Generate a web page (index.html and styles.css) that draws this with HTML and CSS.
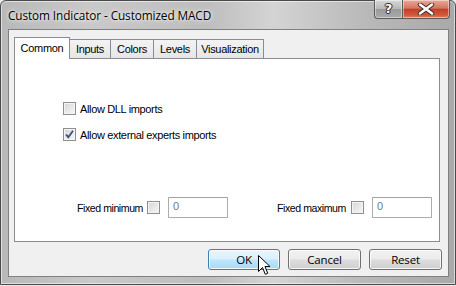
FILE: index.html
```html
<!DOCTYPE html>
<html>
<head>
<meta charset="utf-8">
<link rel="stylesheet" href="styles.css">
</head>
<body>
<div class="window">
  <div class="titlebar">
    <span class="title">Custom Indicator - Customized MACD</span>
    <div class="caption-btns">
      <div class="cbtn help"><span>?</span></div>
      <div class="cbtn close">
        <svg width="18" height="12" viewBox="0 0 18 12"><path d="M3 1.5 L15 10.5 M15 1.5 L3 10.5" stroke="#3a2a2a" stroke-width="4.4" stroke-linecap="round"/><path d="M3 1.5 L15 10.5 M15 1.5 L3 10.5" stroke="#ffffff" stroke-width="2.6" stroke-linecap="round"/></svg>
      </div>
    </div>
  </div>
  <div class="client">
    <div class="tabs">
      <div class="tab active">Common</div>
      <div class="tab">Inputs</div>
      <div class="tab">Colors</div>
      <div class="tab">Levels</div>
      <div class="tab">Visualization</div>
    </div>
    <div class="panel">
      <div class="checks">
        <label class="chk"><span class="box"></span><span>Allow DLL imports</span></label>
        <label class="chk"><span class="box checked"><svg width="11" height="11" viewBox="0 0 11 11"><path d="M2 5.5 L4.3 8.2 L9 1.8" fill="none" stroke="#3d4f87" stroke-width="1.8"/></svg></span><span>Allow external experts imports</span></label>
      </div>
      <div class="fixed">
        <div class="fgroup fmin">
          <span class="flabel">Fixed minimum</span>
          <span class="box"></span>
          <span class="field">0</span>
        </div>
        <div class="fgroup fmax">
          <span class="flabel">Fixed maximum</span>
          <span class="box"></span>
          <span class="field">0</span>
        </div>
      </div>
    </div>
    <div class="buttons">
      <div class="btn hot">OK</div>
      <div class="btn">Cancel</div>
      <div class="btn">Reset</div>
    </div>
  </div>
  <svg class="cursor" width="13" height="21" viewBox="0 0 13 21"><path d="M0.5 0.5 L0.5 16.5 L4.5 12.5 L7.3 19.3 L9.7 18.3 L7 11.5 L12 11.5 Z" fill="#fff" stroke="#000" stroke-width="1" stroke-linejoin="miter"/></svg>
</div>
</body>
</html>
```
FILE: styles.css
```css
* { box-sizing: border-box; }
html, body { margin: 0; padding: 0; }
body {
  width: 456px;
  height: 286px;
  background: #e8e8e8;
  overflow: hidden;
  font-family: "Liberation Sans", Arial, sans-serif;
  font-size: 11px;
  color: #000;
}
.window {
  position: relative;
  width: 456px;
  height: 285px;
  border: 1px solid #4a4a4a;
  border-radius: 6px 6px 0 0;
  background: linear-gradient(90deg, #b8b8b8 0%, #c9c9c9 20%, #bdbdbd 45%, #d4d4d4 60%, #b9b9b9 80%, #a9a9a9 100%);
  padding: 0 6px 7px 7px;
  display: flex;
  flex-direction: column;
  box-shadow: inset 0 0 0 1px rgba(255,255,255,0.55);
}
.titlebar {
  height: 28px;
  display: flex;
  align-items: flex-start;
  justify-content: space-between;
  position: relative;
}
.title {
  margin-top: 6px;
  font-family: "Open Sans", "Noto Sans", sans-serif;
  font-size: 11.8px;
  letter-spacing: -0.1px;
  color: #000;
  text-shadow: 0 0 6px rgba(255,255,255,0.9), 0 0 3px rgba(255,255,255,0.9);
}
.caption-btns {
  display: flex;
  margin-top: -1px;
  margin-right: -1px;
}
.cbtn {
  height: 19px;
  display: flex;
  align-items: center;
  justify-content: center;
  border: 1px solid #5a5a5a;
  border-top: none;
  box-shadow: inset 0 0 0 1px rgba(255,255,255,0.45);
}
.help {
  width: 28px;
  border-radius: 0 0 0 4px;
  border-right: none;
  background: linear-gradient(180deg, #d8d8d8 0%, #b8b8b8 48%, #9a9a9a 52%, #a9a9a9 100%);
}
.help span {
  font-family: "DejaVu Sans", sans-serif;
  font-weight: bold;
  font-size: 13px;
  color: #fff;
  text-shadow: 0 0 1px #222, 0 0 1px #222, 1px 0 0 #333, -1px 0 0 #333, 0 1px 0 #333, 0 -1px 0 #333;
  margin-top: -1px;
}
.close {
  width: 48px;
  border-radius: 0 0 4px 0;
  background: linear-gradient(180deg, #e9a99a 0%, #d4775f 45%, #c2402a 52%, #d35a3c 85%, #e08262 100%);
}
.client {
  flex: 1;
  background: #f0f0f0;
  border: 1px solid #808080;
  display: flex;
  flex-direction: column;
  padding: 7px 0 0 5px;
}
.tabs {
  display: flex;
  align-items: flex-end;
  height: 21px;
  position: relative;
  z-index: 1;
}
.tab {
  height: 19px;
  padding: 0 4px;
  border: 1px solid #898c95;
  border-bottom: none;
  border-right: none;
  background: linear-gradient(180deg, #f3f3f3, #e6e6e6);
  display: flex;
  align-items: center;
  justify-content: center;
  letter-spacing: -0.3px;
}
.tab:nth-child(5) { border-right: 1px solid #898c95; }
.tab.active {
  height: 22px;
  margin-bottom: -1px;
  background: #fff;
  border-right: 1px solid #898c95;
  width: 56px;
  padding-bottom: 2px;
}
.tab.active + .tab { border-left: none; }
.tab:nth-child(2) { width: 40px; }
.tab:nth-child(3) { width: 43px; }
.tab:nth-child(4) { width: 43px; }
.tab:nth-child(5) { width: 68px; }
.panel {
  width: 426px;
  height: 184px;
  background: #fff;
  border: 1px solid #898c95;
  display: flex;
  flex-direction: column;
}
.checks {
  display: flex;
  flex-direction: column;
  gap: 13px;
  padding: 43px 0 0 48px;
}
.chk {
  display: flex;
  align-items: center;
  gap: 4px;
  height: 13px;
  letter-spacing: -0.35px;
}
.box {
  width: 13px;
  height: 13px;
  flex: none;
  border: 1px solid #8e8f8f;
  background: linear-gradient(135deg, #d6d6d6 0%, #eaeaea 60%, #f7f7f7 100%);
  box-shadow: inset 0 0 0 1px #f4f4f4;
  display: flex;
  align-items: center;
  justify-content: center;
}
.box.checked svg { display: block; }
.fixed {
  display: flex;
  padding: 0 0 0 62px;
  margin-top: 56px;
}
.fgroup {
  flex: none;
  display: flex;
  align-items: center;
  height: 21px;
}
.fmin { width: 200px; }
.flabel {
  font-size: 10.6px;
  letter-spacing: -0.45px;
  white-space: nowrap;
}
.fmin .flabel { width: 70px; }
.fmax .flabel { width: 74px; }
.fgroup .box { margin-right: 8px; }
.field {
  width: 60px;
  height: 21px;
  border: 1px solid #abadb3;
  border-top-color: #a0a2a8;
  border-radius: 1px;
  background: #fff;
  color: #6d7a8a;
  padding: 2px 0 0 4px;
  font-size: 11px;
}
.buttons {
  display: flex;
  justify-content: flex-end;
  gap: 8px;
  padding: 7px 6px 0 0;
}
.btn {
  width: 73px;
  height: 21px;
  border: 1px solid #707070;
  border-radius: 3px;
  background: linear-gradient(180deg, #f2f2f2 0%, #ebebeb 48%, #dddddd 52%, #cfcfcf 100%);
  box-shadow: inset 0 0 0 1px rgba(255,255,255,0.8);
  display: flex;
  align-items: center;
  justify-content: center;
  font-family: "Open Sans", "Noto Sans", sans-serif;
  font-size: 11.5px;
  letter-spacing: -0.2px;
}
.btn.hot {
  width: 72px;
  border-color: #3c7fb1;
  background: linear-gradient(180deg, #eaf6fd 0%, #d9f0fc 48%, #bee6fd 52%, #a7d9f5 100%);
}
.cursor {
  position: absolute;
  left: 257px;
  top: 254px;
}
```
